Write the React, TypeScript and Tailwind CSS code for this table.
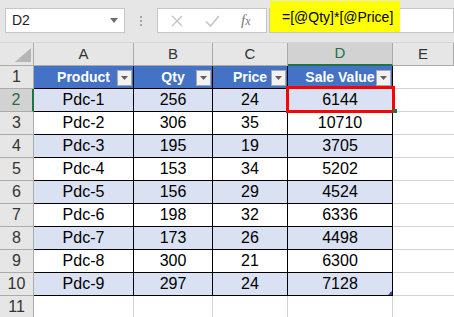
import React from "react";

const rows = [
  ["Pdc-1", "256", "24", "6144"],
  ["Pdc-2", "306", "35", "10710"],
  ["Pdc-3", "195", "19", "3705"],
  ["Pdc-4", "153", "34", "5202"],
  ["Pdc-5", "156", "29", "4524"],
  ["Pdc-6", "198", "32", "6336"],
  ["Pdc-7", "173", "26", "4498"],
  ["Pdc-8", "300", "21", "6300"],
  ["Pdc-9", "297", "24", "7128"],
];

const headers = ["Product", "Qty", "Price", "Sale Value"];
const letters = ["A", "B", "C", "D", "E"];

function FilterBtn() {
  return (
    <div className="absolute right-[1px] top-[4px] w-[15px] h-[16px] bg-[#f2f2f2] border border-[#a9a9a9] flex items-center justify-center">
      <svg width="7" height="4" viewBox="0 0 7 4">
        <polygon points="0,0 7,0 3.5,4" fill="#5f5f5f" />
      </svg>
    </div>
  );
}

export default function App() {
  return (
    <div
      className="w-[454px] h-[317px] overflow-hidden bg-white relative"
      style={{ fontFamily: '"Liberation Sans", Arial, sans-serif' }}
    >
      {/* Top bar */}
      <div className="h-[43px] bg-[#e6e6e6] flex items-start pt-[8px] border-b border-[#d6d6d6]">
        <div className="ml-[5px] w-[120px] h-[25px] bg-white border border-[#c6c6c6] flex items-center justify-between pl-[6px] pr-[6px]">
          <span className="text-[14px] text-[#222]">D2</span>
          <svg width="8" height="5" viewBox="0 0 8 5">
            <polygon points="0,0 8,0 4,5" fill="#6e6e6e" />
          </svg>
        </div>
        <div className="w-[32px] h-[25px] flex flex-col items-center justify-center gap-[2px]">
          <div className="w-[2px] h-[2px] bg-[#a6a6a6]" />
          <div className="w-[2px] h-[2px] bg-[#a6a6a6]" />
          <div className="w-[2px] h-[2px] bg-[#a6a6a6]" />
        </div>
        <div className="w-[110px] h-[25px] bg-white border border-[#c6c6c6] flex items-center pl-[12px]">
          <svg width="12" height="12" viewBox="0 0 12 12" className="ml-[1px]">
            <path d="M1 1 L11 11 M11 1 L1 11" stroke="#c4c4c4" strokeWidth="1.4" />
          </svg>
          <svg width="15" height="12" viewBox="0 0 15 12" className="ml-[22px]">
            <path d="M1 6.5 L5.5 11 L14 1" stroke="#c4c4c4" strokeWidth="1.6" fill="none" />
          </svg>
          <span
            className="ml-[21px] text-[15px] italic text-[#777]"
            style={{ fontFamily: '"Liberation Serif", "Times New Roman", serif' }}
          >
            f<span className="text-[12px]">x</span>
          </span>
        </div>
        <div className="ml-[2px] flex-1 h-[25px] bg-white border border-[#c6c6c6]" />
      </div>

      {/* Yellow formula highlight */}
      <div className="absolute left-[270px] top-[1px] w-[130px] h-[31px] bg-[#ffff00] flex items-center pl-[12px] pt-[1px]">
        <span className="text-[14px] text-black">=[@Qty]*[@Price]</span>
      </div>

      {/* Grid */}
      <div className="grid grid-cols-[34px_100px_79px_75px_105px_1fr] auto-rows-[23px] text-[16px]">
        {/* column header row */}
        <div className="bg-[#e6e6e6] border-r border-b border-[#ababab] relative">
          <svg width="16" height="14" viewBox="0 0 16 14" className="absolute left-[15px] top-[5px]">
            <polygon points="16,0 16,14 0,14" fill="#b5b5b5" />
          </svg>
        </div>
        {letters.map((l) =>
          l === "D" ? (
            <div
              key={l}
              className="bg-[#d2d2d2] border-r border-[#ababab] border-b-2 border-b-[#217346] flex items-center justify-center text-[#217346] text-[15px]"
            >
              {l}
            </div>
          ) : (
            <div
              key={l}
              className="bg-[#e6e6e6] border-r border-b border-[#ababab] flex items-center justify-center text-[#333] text-[15px]"
            >
              {l}
            </div>
          )
        )}

        {/* row 1: table header */}
        <div className="bg-[#e6e6e6] border-r border-b border-[#ababab] flex items-center justify-center text-[#333]">
          1
        </div>
        {headers.map((h) => (
          <div
            key={h}
            className="relative bg-[#4472c4] border-r border-b border-black flex items-center justify-center text-white font-bold text-[14px]"
          >
            <span>{h}</span>
            <FilterBtn />
          </div>
        ))}
        <div className="border-b border-[#d4d4d4]" />

        {rows.map((r, i) => {
          const rowNum = i + 2;
          const band = i % 2 === 0 ? "bg-[#d9e1f2]" : "bg-white";
          const sel = rowNum === 2;
          return (
            <React.Fragment key={rowNum}>
              {sel ? (
                <div className="bg-[#d2d2d2] border-r-2 border-r-[#217346] border-b border-b-[#ababab] flex items-center justify-center text-[#217346]">
                  {rowNum}
                </div>
              ) : (
                <div className="bg-[#e6e6e6] border-r border-b border-[#ababab] flex items-center justify-center text-[#333]">
                  {rowNum}
                </div>
              )}
              {r.map((v, j) => (
                <div
                  key={j}
                  className={`${band} relative border-r border-b border-black flex items-center justify-center text-black`}
                >
                  {v}
                  {rowNum === 10 && j === 3 && (
                    <svg width="4" height="4" viewBox="0 0 4 4" className="absolute right-0 bottom-0">
                      <polygon points="4,0 4,4 0,4" fill="#2e4da0" />
                      <rect x="2" y="1" width="2" height="3" fill="#2e4da0" />
                    </svg>
                  )}
                </div>
              ))}
              <div className="border-b border-[#d4d4d4]" />
            </React.Fragment>
          );
        })}

        {/* row 11 */}
        <div className="bg-[#e6e6e6] border-r border-b border-[#ababab] flex items-center justify-center text-[#333]">
          11
        </div>
        <div className="border-r border-b border-[#d4d4d4]" />
        <div className="border-r border-b border-[#d4d4d4]" />
        <div className="border-r border-b border-[#d4d4d4]" />
        <div className="border-r border-b border-[#d4d4d4]" />
        <div className="border-b border-[#d4d4d4]" />
      </div>

      {/* Red annotation box around D2 */}
      <div className="absolute left-[286px] top-[86px] w-[109px] h-[27px] border-[3px] border-[#ff0000]" />
      {/* fill handle */}
      <div className="absolute left-[393px] top-[109px] w-[4px] h-[4px] bg-[#217346]" />
    </div>
  );
}
